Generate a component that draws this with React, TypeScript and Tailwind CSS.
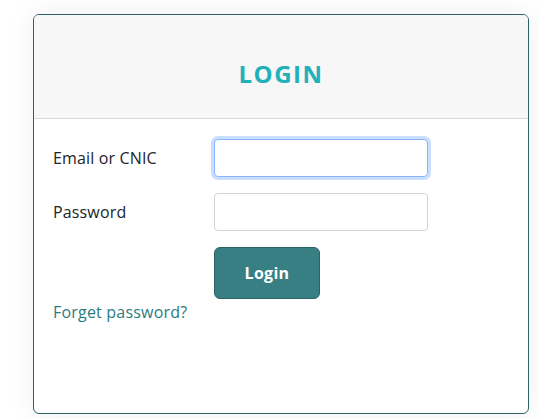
export default function App() {
  return (
    <div className="min-h-screen bg-white pt-[14px] pl-[33px] font-['Open_Sans',sans-serif]">
      <div className="flex h-[400px] w-[496px] flex-col overflow-hidden rounded-[6px] border border-[#2e6266] bg-white shadow-[0_0_28px_rgba(0,0,0,0.07)]">
        {/* Header */}
        <div className="flex h-[104px] shrink-0 items-center justify-center border-b border-[#dadada] bg-[#f7f7f7] pt-[14px]">
          <h1 className="text-[24px] font-bold tracking-[1.5px] text-[#22b1ba]">LOGIN</h1>
        </div>

        {/* Form */}
        <div className="px-[19px] pt-[20px]">
          <div className="flex items-center">
            <label className="w-[161px] text-[16px] tracking-[0.15px] text-[#212529]">Email or CNIC</label>
            <div className="h-[38px] w-[214px] rounded-[4px] border border-[#86b7fe] bg-white shadow-[0_0_0_3px_rgba(13,110,253,0.22)]" />
          </div>
          <div className="mt-4 flex items-center">
            <label className="w-[161px] text-[16px] tracking-[0.15px] text-[#212529]">Password</label>
            <div className="h-[38px] w-[214px] rounded-[4px] border border-[#ced4da] bg-white" />
          </div>
          <div className="mt-4 pl-[161px]">
            <button className="h-[52px] w-[106px] rounded-[6px] border border-[#2a6468] bg-[#387f83] text-[16px] font-bold tracking-[0.3px] text-white">
              Login
            </button>
          </div>
          <a className="block text-[16px] leading-[26px] tracking-[0.2px] text-[#2b7c80]">Forget password?</a>
        </div>
      </div>
    </div>
  );
}
